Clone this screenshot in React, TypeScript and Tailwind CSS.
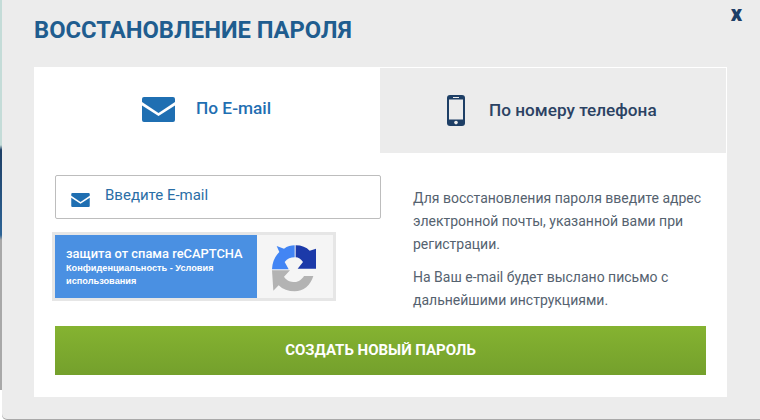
const roboto = { fontFamily: "Roboto, sans-serif" };

function MailIcon({ className }: { className: string }) {
  return (
    <svg viewBox="0 0 33 25" className={className}>
      <path d="M2 0h29a2 2 0 0 1 2 2v3L16.500 16 0 5V2a2 2 0 0 1 2-2z" fill="#1f6fb2" />
      <path d="M0 8.500 16.500 19 33 8.500V23a2 2 0 0 1-2 2H2a2 2 0 0 1-2-2z" fill="#1f6fb2" />
    </svg>
  );
}

function PhoneIcon() {
  return (
    <svg viewBox="0 0 18 31" className="w-[18px] h-[31px]">
      <rect width="18" height="31" rx="3" fill="#1e3f66" />
      <rect x="2" y="4.500" width="14" height="20" fill="#ececec" />
      <rect x="6" y="2" width="6" height="1" fill="#ececec" />
      <circle cx="9" cy="27.600" r="1.800" fill="#ececec" />
    </svg>
  );
}

function RecaptchaLogo() {
  return (
    <svg viewBox="30 20 150 150" className="w-[50px] h-[50px]">
      <path d="M104 30V66C92 66 82 70 74 80L86 102H36C37 80 45 62 58 50L50 32L72 40C82 33 93 30 104 30z" fill="#4285f4" />
      <path d="M107 30C125 30 139 36 149 46L168 40V100H113L129 80C123 71 115 66 107 66z" fill="#1c3aa9" />
      <path d="M36 105H90L72 124C80 136 92 140 104 140C116 140 126 132 132 122H160C152 150 130 168 104 168C85 168 68 162 56 150L40 166z" fill="#b3b3b3" />
    </svg>
  );
}

export default function App() {
  return (
    <div className="flex w-[760px] h-[420px] overflow-hidden bg-white" style={roboto}>
      {/* page behind the modal, only a sliver shows */}
      <div className="w-[2px] h-[390px] bg-[linear-gradient(to_bottom,#c4dcd8_0,#c4dcd8_145px,#1e3f66_150px,#2d6496_235px,#a8a8a8_240px,#a8a8a8_390px)]" />
      <div className="relative flex-1 h-[419px] bg-[#ececec] rounded-bl-[5px] shadow-[0_1px_0_#a9a9a9] pl-[32px] pr-[33px] pt-[16px]">
        <button className="absolute right-[18px] top-[3px] text-[#1e3f66] text-[22px] leading-[22px] font-black">
          x
        </button>
        <h1 className="text-[23.750px] leading-[28px] font-bold text-[#1f5d8f] mb-[23px]">ВОССТАНОВЛЕНИЕ ПАРОЛЯ</h1>

        <div className="bg-white h-[330px]">
          <div className="flex h-[86px]">
            <div className="w-[346px] flex items-center gap-[21px] pl-[108px] pb-[2px]">
              <MailIcon className="w-[33px] h-[25px]" />
              <span className="text-[17.300px] font-medium text-[#1f6fb2]">По E-mail</span>
            </div>
            <div className="flex-1 bg-[#ececec] mt-[1px] mr-[1px] flex items-center gap-[24px] pl-[67px]">
              <PhoneIcon />
              <span className="text-[17.200px] font-medium text-[#2b4263]">По номеру телефона</span>
            </div>
          </div>

          <div className="flex pl-[21px] pt-[22px]">
            <div className="w-[326px]">
              <div className="h-[44px] border border-[#bdbdbd] rounded-[2px] flex items-center pl-[15px] gap-[15px]">
                <MailIcon className="w-[19px] h-[14px] mt-[5px]" />
                <span className="text-[15px] text-[#2a6ea6] mb-[3px]">Введите E-mail</span>
              </div>
              <div className="-ml-[3px] mt-[13px] w-[284px] h-[69px] bg-[#f5f5f5] border-[3px] border-[#e6e6e6] flex">
                <div className="w-[202px] bg-[#4a90e2] text-white pl-[11px] pt-[12px]">
                  <p className="text-[12.900px] leading-[14px] font-medium">защита от спама reCAPTCHA</p>
                  <p className="text-[9.200px] leading-[13px] font-bold mt-[1px]" style={{ fontFamily: "'Liberation Sans', sans-serif" }}>
                    Конфиденциальность - Условия использования
                  </p>
                </div>
                <div className="flex-1 flex items-center justify-center pr-[1px]">
                  <RecaptchaLogo />
                </div>
              </div>
            </div>
            <div className="ml-[32px] w-[310px] text-[14px] leading-[23px] text-[#55626f] pt-[12px]">
              <p className="mb-[10px]">Для восстановления пароля введите адрес электронной почты, указанной вами при регистрации.</p>
              <p>На Ваш e-mail будет выслано письмо с дальнейшими инструкциями.</p>
            </div>
          </div>

          <div className="mx-[21px] mt-[14px] h-[49px] flex items-center justify-center bg-gradient-to-b from-[#85b331] to-[#74a02c] text-white text-[15px] font-bold">
            СОЗДАТЬ НОВЫЙ ПАРОЛЬ
          </div>
        </div>
      </div>
    </div>
  );
}
